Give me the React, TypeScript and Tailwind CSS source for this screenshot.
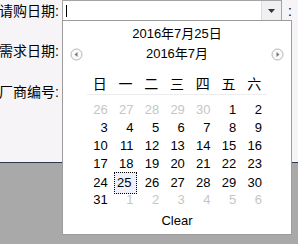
import React from 'react';

const weekdays = ['日', '一', '二', '三', '四', '五', '六'];

type Day = { n: number; other?: boolean; selected?: boolean };

const weeks: Day[][] = [
  [{ n: 26, other: true }, { n: 27, other: true }, { n: 28, other: true }, { n: 29, other: true }, { n: 30, other: true }, { n: 1 }, { n: 2 }],
  [{ n: 3 }, { n: 4 }, { n: 5 }, { n: 6 }, { n: 7 }, { n: 8 }, { n: 9 }],
  [{ n: 10 }, { n: 11 }, { n: 12 }, { n: 13 }, { n: 14 }, { n: 15 }, { n: 16 }],
  [{ n: 17 }, { n: 18 }, { n: 19 }, { n: 20 }, { n: 21 }, { n: 22 }, { n: 23 }],
  [{ n: 24 }, { n: 25, selected: true }, { n: 26 }, { n: 27 }, { n: 28 }, { n: 29 }, { n: 30 }],
  [{ n: 31 }, { n: 1, other: true }, { n: 2, other: true }, { n: 3, other: true }, { n: 4, other: true }, { n: 5, other: true }, { n: 6, other: true }],
];

const NavArrow = ({ dir }: { dir: 'left' | 'right' }) => (
  <svg width="13" height="13" viewBox="0 0 13 13">
    <circle cx="6.5" cy="6.5" r="5.5" fill="#fafafa" stroke="#b4b4b4" />
    {dir === 'left' ? (
      <path d="M4.5 6.5 L7.5 4 L7.5 9 Z" fill="#7a7a7a" />
    ) : (
      <path d="M8.5 6.5 L5.5 4 L5.5 9 Z" fill="#7a7a7a" />
    )}
  </svg>
);

export default function App() {
  return (
    <div
      className="relative w-[298px] h-[244px] overflow-hidden bg-[#a9a9a9] text-[13px] text-black"
      style={{ fontFamily: '"Liberation Sans", "Noto Sans CJK SC", sans-serif' }}
    >
      {/* Form area */}
      <div className="h-[163px] bg-[#f6f4f6] border-b border-[#2b3a4a] text-[14px]">
        <div className="flex items-start h-[40px]">
          <div className="w-[62px] shrink-0 pt-[1px] pr-[3px] flex justify-end overflow-hidden">
            <span className="whitespace-nowrap">请购日期:</span>
          </div>
          <div className="w-[220px] h-[21px] bg-white border border-[#a5a5a5] flex items-center">
            <span className="ml-[3px] w-px h-[12px] bg-black" />
            <div className="ml-auto w-[20px] h-[19px] bg-[#f0eff2] border-l border-[#dcdcdc] flex items-center justify-center">
              <svg width="7" height="4" viewBox="0 0 7 4">
                <path d="M0 0 H7 L3.5 4 Z" fill="#333" />
              </svg>
            </div>
          </div>
          <span className="ml-[6px] pt-[1px]">:</span>
        </div>
        <div className="flex items-start h-[41px]">
          <div className="w-[62px] shrink-0 pt-[1px] pr-[3px] flex justify-end overflow-hidden">
            <span className="whitespace-nowrap">需求日期:</span>
          </div>
        </div>
        <div className="flex items-start h-[40px]">
          <div className="w-[62px] shrink-0 pt-[1px] pr-[3px] flex justify-end overflow-hidden">
            <span className="whitespace-nowrap">厂商编号:</span>
          </div>
        </div>
      </div>

      {/* Date picker popup */}
      <div className="absolute left-[62px] top-[20px] w-[230px] h-[215px] bg-white border border-[#9c9c9c] flex flex-col">
        <div className="h-[24px] flex items-center justify-center pt-[2px]">2016年7月25日</div>
        <div className="h-[18px] flex items-center justify-between px-[7px]">
          <NavArrow dir="left" />
          <span>2016年7月</span>
          <NavArrow dir="right" />
        </div>
        <div className="mt-[11px] mx-[24px]">
          <div className="grid grid-cols-7 h-[21px] border-b border-[#ececec] text-[14px]">
            {weekdays.map((w) => (
              <div key={w} className="flex items-center justify-center">
                {w}
              </div>
            ))}
          </div>
          <div className="mt-[5px] flex flex-col">
            {weeks.map((week, i) => (
              <div key={i} className="grid grid-cols-7 h-[18px]">
                {week.map((d, j) => (
                  <div
                    key={j}
                    className={`flex items-center justify-end pr-[5px] text-[13px] ${
                      d.other ? 'text-[#c6c6c6]' : 'text-black'
                    } ${d.selected ? 'border border-dotted border-black bg-[#eef0fb] mx-[1px]' : ''}`}
                  >
                    {d.n}
                  </div>
                ))}
              </div>
            ))}
          </div>
        </div>
        <div className="mt-auto mb-[5px] h-[16px] flex items-center justify-center">Clear</div>
      </div>
    </div>
  );
}
